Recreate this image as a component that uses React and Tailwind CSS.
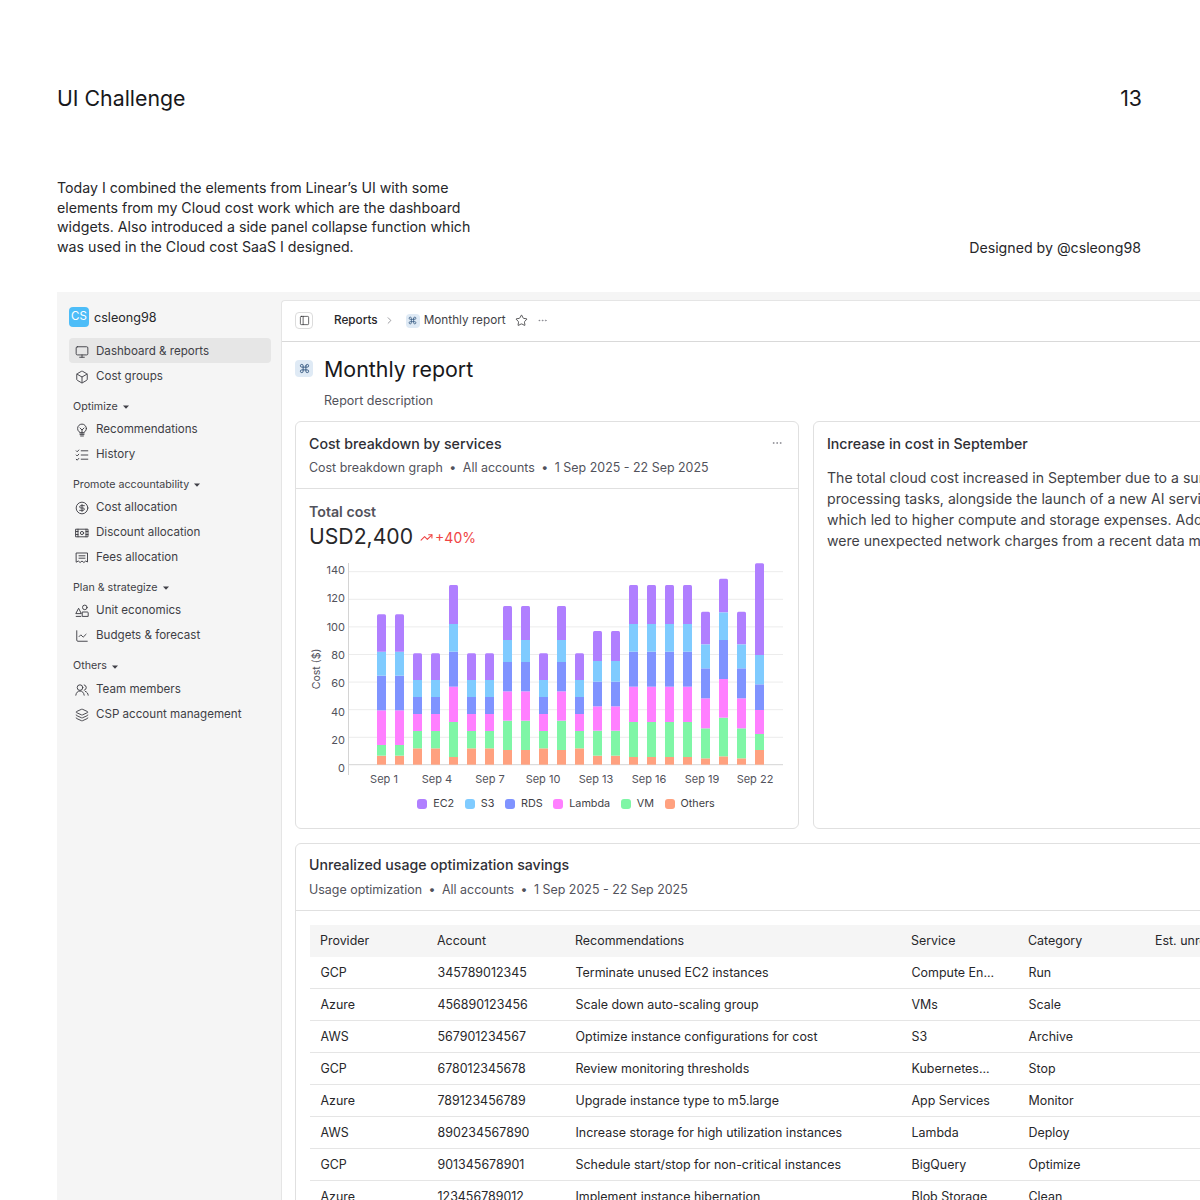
import React from 'react';
import { Monitor, Box, CircleDollarSign, ChartLine, ChevronRight, Star, Ellipsis, Command, PanelLeft, TrendingUp, Layers } from 'lucide-react';

const FONT = 'font-["Inter",sans-serif]';

const Caret = () => (
  <svg width="6" height="4" viewBox="0 0 6 4" className="ml-[5px] mt-px">
    <path d="M0 0.5h6L3 3.8z" fill="#3f3f46" />
  </svg>
);

// small custom icons for what lucide doesn't have
const IconBase = ({ children, className }) => (
  <svg width="14" height="14" viewBox="0 0 14 14" fill="none" stroke="currentColor" strokeWidth="0.95" strokeLinecap="round" strokeLinejoin="round" className={className}>
    {children}
  </svg>
);

const BulbIcon = ({ className }) => (
  <IconBase className={className}>
    <circle cx="7" cy="5.5" r="4.4" />
    <path d="M5 5l2 2 2-2M7 7v2.8" />
    <path d="M4.8 10h4.4M5 11.6h4M5.6 13h2.8" />
  </IconBase>
);

const ChecklistIcon = ({ className }) => (
  <IconBase className={className}>
    <path d="M1.2 2.8l1 1 1.6-1.8M1.2 7l1 1 1.6-1.8M1.2 11.2l1 1 1.6-1.8" />
    <path d="M6.2 2.8h6.6M6.2 7h6.6M6.2 11.2h6.6" />
  </IconBase>
);

const DiscountIcon = ({ className }) => (
  <IconBase className={className}>
    <path d="M1 3.2h12v7.6H1z" />
    <path d="M3 3.2v7.6M11 3.2v7.6" />
    <circle cx="7" cy="7" r="1.6" />
    <path d="M1 5.5h2M1 8.5h2M11 5.5h2M11 8.5h2" />
  </IconBase>
);

const FeesIcon = ({ className }) => (
  <IconBase className={className}>
    <path d="M1.5 2h11v9l-1.8-1-1.8 1.5L7 10l-1.9 1.5L3.3 10l-1.8 1z" />
    <path d="M4 4.8h6M4 7.2h6" />
  </IconBase>
);

const UnitIcon = ({ className }) => (
  <IconBase className={className}>
    <path d="M3.8 4.6L6.3 9.6H1.2z" />
    <circle cx="9.8" cy="3.4" r="2.3" />
    <path d="M7.6 8h4.8c.5 0 .8.3.8.8v3.6H7.6z" />
    <path d="M1.2 12.4h4.6" />
  </IconBase>
);

const TeamIcon = ({ className }) => (
  <IconBase className={className}>
    <circle cx="5" cy="4.6" r="2.8" />
    <path d="M0.8 12.2c.3-2.6 2-4.2 4.2-4.2s3.9 1.6 4.2 4.2" />
    <path d="M9.2 1.9a2.8 2.8 0 0 1 0 5.4" />
    <path d="M10.4 8.4c1.6.6 2.6 2 2.8 3.8" />
  </IconBase>
);

const navGroups = [
  {
    title: null,
    items: [
      { label: 'Dashboard & reports', icon: Monitor, active: true },
      { label: 'Cost groups', icon: Box },
    ],
  },
  {
    title: 'Optimize',
    items: [
      { label: 'Recommendations', icon: BulbIcon },
      { label: 'History', icon: ChecklistIcon },
    ],
  },
  {
    title: 'Promote accountability',
    items: [
      { label: 'Cost allocation', icon: CircleDollarSign },
      { label: 'Discount allocation', icon: DiscountIcon },
      { label: 'Fees allocation', icon: FeesIcon },
    ],
  },
  {
    title: 'Plan & strategize',
    items: [
      { label: 'Unit economics', icon: UnitIcon },
      { label: 'Budgets & forecast', icon: ChartLine },
    ],
  },
  {
    title: 'Others',
    height: 'h-[29px]',
    items: [
      { label: 'Team members', icon: TeamIcon },
      { label: 'CSP account management', icon: Layers },
    ],
  },
];

const Sidebar = () => (
  <aside className="w-[224px] shrink-0 pl-3 pr-[10px] pt-[15px]">
    <div className="flex items-center h-5 mb-[11px]">
      <div className="w-5 h-5 rounded bg-[#4dbdf8] text-white text-[11.5px] flex items-center justify-center">CS</div>
      <span className="ml-[5px] pt-[3px] text-[12.6px] text-[#27272a]">csleong98</span>
    </div>
    {navGroups.map((group, i) => (
      <div key={i}>
        {group.title && (
          <div className={`${group.height || 'h-7'} pt-[10px] pl-1 flex items-center text-[10.7px] text-[#3f3f46]`}>
            {group.title}
            <Caret />
          </div>
        )}
        {group.items.map((item) => {
          const Icon = item.icon;
          return (
            <div
              key={item.label}
              className={`h-[25px] pt-[3px] flex items-center pl-[6px] rounded text-[11.6px] text-[#3f3f46] ${item.active ? 'bg-[#e6e6e6]' : ''}`}
            >
              <Icon size={14} strokeWidth={1.6} className="shrink-0 text-[#3f3f46]" />
              <span className="ml-[7px]">{item.label}</span>
            </div>
          );
        })}
      </div>
    ))}
  </aside>
);

const CmdBadge = ({ box, icon }) => (
  <span className={`${box} rounded bg-[#dfeaf5] flex items-center justify-center shrink-0`}>
    <Command size={icon} strokeWidth={2} className="text-[#33577f]" />
  </span>
);

const Dot = () => <span className="mx-[6.5px] text-[#52525b]">•</span>;

const Topbar = () => (
  <div className="h-[41px] border-b border-[#d9d9d9] flex items-center pl-[13px] text-[11.75px]">
    <span className="w-[18px] h-[17px] rounded border border-[#dcdcdc] flex items-center justify-center">
      <PanelLeft size={11} strokeWidth={1.5} className="text-[#27272a]" />
    </span>
    <span className="ml-[21px] text-[#27272a] font-medium">Reports</span>
    <ChevronRight size={11} strokeWidth={1.25} className="ml-[6px] text-[#52525b]" />
    <span className="ml-[11px]"><CmdBadge box="w-[14px] h-[14px] flex" icon={9} /></span>
    <span className="ml-1 text-[#3f3f46]">Monthly report</span>
    <Star size={13} strokeWidth={1.4} className="ml-[9px] text-[#27272a]" />
    <Ellipsis size={11} strokeWidth={1.25} className="ml-[9px] text-[#71717a]" />
  </div>
);

// bar tops are [others, vm, lambda, rds, s3, ec2] in chart coordinates
const BAR_COLORS = ['#ffa17f', '#7ff6a6', '#ff7fff', '#7f93ff', '#7fcbff', '#b07fff'];
const A = [602, 570, 466, 362, 290, 178];
const B = [580, 528, 477, 426, 375, 295];
const C = [606, 501, 395, 290, 207, 90];
const D = [585, 497, 409, 321, 255, 153];
const F = [602, 527, 454, 380, 318, 228];
const G = [610, 520, 430, 340, 268, 170];
const H = [604, 488, 372, 255, 172, 71];
const I = [585, 537, 465, 388, 300, 25];
const bars = [A, A, B, B, C, B, B, D, D, B, D, B, F, F, C, C, C, C, G, H, G, I];

const yTicks = [140, 120, 100, 80, 60, 40, 20, 0];
const xLabels = ['Sep 1', 'Sep 4', 'Sep 7', 'Sep 10', 'Sep 13', 'Sep 16', 'Sep 19', 'Sep 22'];

// svg origin is page (300, 555), bars were read off at 3x
const Chart = () => (
  <svg width="490" height="232" viewBox="0 0 490 232" className="block" fontFamily="Inter, sans-serif">
    {yTicks.map((t, i) => {
      const gy = 16.7 + i * 27.6;
      return (
        <g key={t}>
          {t !== 0 && <line x1="48" x2="483" y1={gy} y2={gy} stroke="#ececec" strokeWidth="1" />}
          <text x="45" y={15 + i * 28.3 + 4} textAnchor="end" fontSize="11" fill="#52525b">{t}</text>
        </g>
      );
    })}
    <line x1="48.5" x2="48.5" y1="8" y2="220" stroke="#d4d4d4" strokeWidth="1" />
    <line x1="48" x2="483" y1="209.7" y2="209.7" stroke="#d4d4d4" strokeWidth="1" />
    {bars.map((b, i) => {
      const x = 77 + i * 18;
      let prev = 629;
      return (
        <g key={i}>
          {b.map((top, j) => {
            const y = top / 3;
            const h = (prev - top) / 3;
            prev = top;
            return j === 5 ? (
              <path key={j} d={`M${x} ${y + h}V${y + 1.5}Q${x} ${y} ${x + 1.5} ${y}H${x + 7.5}Q${x + 9} ${y} ${x + 9} ${y + 1.5}V${y + h}Z`} fill={BAR_COLORS[j]} />
            ) : (
              <rect key={j} x={x} y={y} width="9" height={h} fill={BAR_COLORS[j]} />
            );
          })}
        </g>
      );
    })}
    {xLabels.map((l, i) => (
      <text key={l} x={84 + i * 53} y="228" textAnchor="middle" fontSize="11" fill="#52525b">{l}</text>
    ))}
    <text transform="translate(20 114) rotate(-90)" textAnchor="middle" fontSize="10.6" fill="#52525b">Cost ($)</text>
  </svg>
);

const legend = [
  { label: 'EC2', color: 'bg-[#b07fff]' },
  { label: 'S3', color: 'bg-[#7fcbff]' },
  { label: 'RDS', color: 'bg-[#7f93ff]' },
  { label: 'Lambda', color: 'bg-[#ff7fff]' },
  { label: 'VM', color: 'bg-[#7ff6a6]' },
  { label: 'Others', color: 'bg-[#ffa17f]' },
];

const Legend = () => (
  <div className="flex justify-center gap-[10.6px] text-[10.8px] text-[#3f3f46] mt-[9px] ml-[38px]">
    {legend.map((l) => (
      <div key={l.label} className="flex items-center gap-[6px]">
        <span className={`w-[10px] h-[10px] rounded-[3px] ${l.color}`} />
        {l.label}
      </div>
    ))}
  </div>
);

const tableRows = [
  ['GCP', '345789012345', 'Terminate unused EC2 instances', 'Compute En...', 'Run'],
  ['Azure', '456890123456', 'Scale down auto-scaling group', 'VMs', 'Scale'],
  ['AWS', '567901234567', 'Optimize instance configurations for cost', 'S3', 'Archive'],
  ['GCP', '678012345678', 'Review monitoring thresholds', 'Kubernetes...', 'Stop'],
  ['Azure', '789123456789', 'Upgrade instance type to m5.large', 'App Services', 'Monitor'],
  ['AWS', '890234567890', 'Increase storage for high utilization instances', 'Lambda', 'Deploy'],
  ['GCP', '901345678901', 'Schedule start/stop for non-critical instances', 'BigQuery', 'Optimize'],
  ['Azure', '123456789012', 'Implement instance hibernation', 'Blob Storage', 'Clean'],
];

const ROW = 'grid grid-cols-[117px_138px_336px_117px_127px_1fr] h-8 pt-[2px] items-center pl-[10px]';

const UsageTable = () => (
  <div className="pt-[14px] px-[14px] text-[12.45px] text-[#27272a]">
    <div className={`${ROW} bg-[#f5f5f5]`}>
      <span>Provider</span>
      <span>Account</span>
      <span>Recommendations</span>
      <span>Service</span>
      <span>Category</span>
      <span>Est. unrealized savings</span>
    </div>
    {tableRows.map((r, i) => (
      <div key={i} className={`${ROW} border-b border-[#e5e5e5]`}>
        {r.map((cell, j) => <span key={j} className="pl-[0.5px]">{cell}</span>)}
        <span />
      </div>
    ))}
  </div>
);

export default function App() {
  return (
    <div className={`w-[1200px] h-[1200px] overflow-hidden bg-white ${FONT}`}>
      <div className="pl-[57px] pr-[58px] pt-[85px]">
        <div className="flex justify-between text-[21.3px] leading-[27px] text-[#18181b]">
          <span>UI Challenge</span>
          <span>13</span>
        </div>
        <div className="flex justify-between items-end mt-[66px] text-[14.18px] leading-[19.7px] text-[#27272a]">
          <p className="w-[430px]">
            Today I combined the elements from Linear’s UI with some elements from my Cloud cost work which are the dashboard widgets. Also introduced a side panel collapse function which was used in the Cloud cost SaaS I designed.
          </p>
          <span className="mr-px mb-[-1px]">Designed by @csleong98</span>
        </div>
      </div>

      <div className="ml-[57px] mt-[35px] w-[1300px] h-[1000px] bg-[#f5f5f5] flex">
        <Sidebar />
        <main className="flex-1 mt-2 bg-white border-l border-t border-[#e5e5e5] rounded-tl">
          <Topbar />
          <div className="px-[13px]">
            <div className="flex items-center mt-[15px] h-[24px]">
              <CmdBadge box="w-[18px] h-[17px] flex" icon={11} />
              <h1 className="ml-[11px] text-[21.4px] text-[#18181b]">Monthly report</h1>
            </div>
            <p className="pl-[29px] mt-[11px] text-[12.5px] leading-[18px] text-[#52525b]">Report description</p>

            <div className="flex gap-[14px] mt-[11px]">
              <section className="w-[504px] h-[408px] border border-[#e0e0e0] rounded-md shrink-0">
                <div className="h-[67px] border-b border-[#e0e0e0] px-[13px] pt-[12px] relative">
                  <h2 className="text-[14.2px] leading-[20px] font-medium text-[#303036]">Cost breakdown by services</h2>
                  <p className="mt-[5px] text-[12.45px] leading-[18px] text-[#52525b]">
                    Cost breakdown graph<Dot />All accounts<Dot />1 Sep 2025 - 22 Sep 2025
                  </p>
                  <Ellipsis size={12} strokeWidth={1.25} className="absolute right-[15px] top-[15px] text-[#71717a]" />
                </div>
                <div className="pt-[14px]">
                  <div className="pl-[13px] text-[14.2px] leading-[18px] font-semibold text-[#52525b]">Total cost</div>
                  <div className="pl-[13px] flex items-center mt-[3px] h-[27px]">
                    <span className="text-[21.2px] text-[#27272a]">USD2,400</span>
                    <TrendingUp size={13} strokeWidth={2} className="ml-[7px] text-[#ef4444]" />
                    <span className="ml-[2px] text-[14px] text-[#ef4444]">+40%</span>
                  </div>
                  <div className="pl-[4px] mt-[4px]">
                    <Chart />
                  </div>
                  <Legend />
                </div>
              </section>

              <section className="flex-1 h-[408px] border border-[#e0e0e0] rounded-md px-[13px] pt-[12px]">
                <h2 className="text-[14.15px] leading-[20px] font-medium text-[#303036]">Increase in cost in September</h2>
                <p className="mt-[13px] text-[14.1px] leading-[21px] text-[#3f3f46] whitespace-nowrap">
                  The total cloud cost increased in September due to a surge in data<br />
                  processing tasks, alongside the launch of a new AI service for customers<br />
                  which led to higher compute and storage expenses. Additionally, there<br />
                  were unexpected network charges from a recent data migration.
                </p>
              </section>
            </div>

            <section className="mt-[14px] border border-[#e0e0e0] rounded-md">
              <div className="h-[67px] border-b border-[#e0e0e0] px-[13px] pt-[11px]">
                <h2 className="text-[14.15px] leading-[20px] font-medium text-[#303036]">Unrealized usage optimization savings</h2>
                <p className="mt-[6px] text-[12.45px] leading-[18px] text-[#52525b]">
                  Usage optimization<Dot />All accounts<Dot />1 Sep 2025 - 22 Sep 2025
                </p>
              </div>
              <UsageTable />
            </section>
          </div>
        </main>
      </div>
    </div>
  );
}
